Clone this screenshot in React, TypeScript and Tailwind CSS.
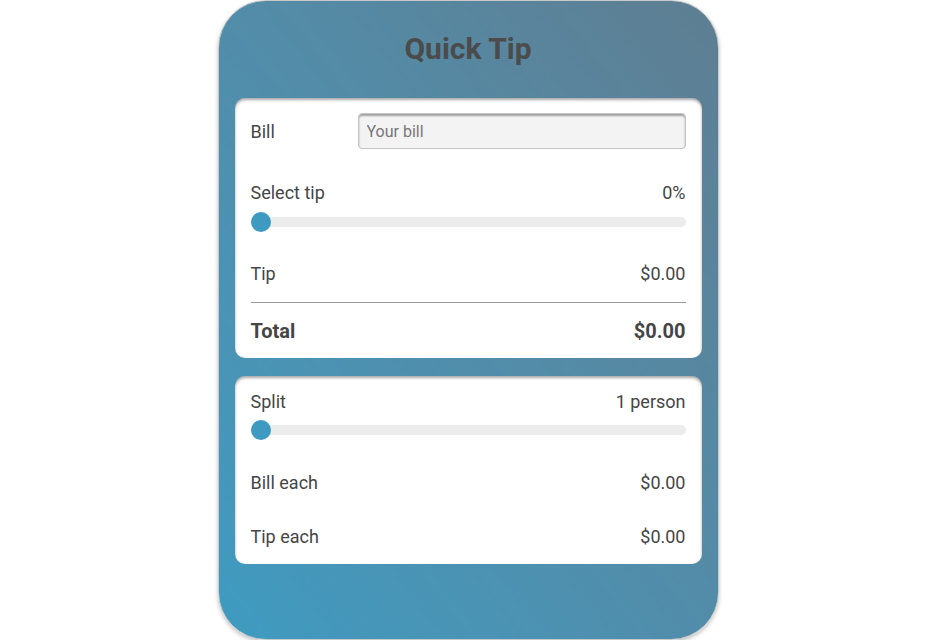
import React, { useState } from "react";

const rowStyle = "flex items-center justify-between text-[18px] leading-6";

const Slider = ({
  value,
  min,
  max,
  onChange,
}: {
  value: number;
  min: number;
  max: number;
  onChange: (v: number) => void;
}) => {
  const pct = ((value - min) / (max - min)) * 100;
  return (
    <div className="relative h-[10px] rounded-full bg-[#ececec]">
      <div
        className="absolute top-1/2 h-5 w-5 -translate-y-1/2 rounded-full bg-[#3d9bc2]"
        style={{ left: `calc(${pct}% - ${(pct / 100) * 20}px)` }}
      ></div>
      <input
        type="range"
        min={min}
        max={max}
        value={value}
        onChange={(e) => onChange(Number(e.target.value))}
        className="absolute inset-0 w-full cursor-pointer opacity-0"
      />
    </div>
  );
};

const App = () => {
  const [bill, setBill] = useState("");
  const [tip, setTip] = useState(0);
  const [split, setSplit] = useState(1);

  const amount = parseFloat(bill) || 0;
  const tipAmount = (amount * tip) / 100;
  const total = amount + tipAmount;

  return (
    <div
      className="flex h-[640px] w-full justify-center bg-white pr-[3px]"
      style={{ fontFamily: "Roboto, 'Noto Sans', sans-serif" }}
    >
      <div className="h-[640px] w-[501px] rounded-[48px] border border-[#c9c9c9] bg-gradient-to-tr from-[#3e9bc1] to-[#5e7e92] px-4 shadow-[0_2px_4px_rgba(0,0,0,0.25)]">
        <h1 className="pt-[30px] text-center text-[30px] font-bold leading-9 text-[#4b4b4b]">
          Quick Tip
        </h1>

        <div className="mt-[31px] rounded-[10px] bg-white px-4 pb-[15px] pt-[15px] text-[#454545] shadow-[inset_0_2px_3px_rgba(0,0,0,0.35)]">
          <div className="flex items-center">
            <span className="w-[107px] text-[18px]">Bill</span>
            <input
              type="text"
              placeholder="Your bill"
              value={bill}
              onChange={(e) => setBill(e.target.value)}
              className="h-[36px] flex-1 rounded-[4px] border border-[#c4c4c4] bg-[#f3f3f3] px-2 text-[16px] text-[#555] shadow-[inset_0_2px_2px_rgba(0,0,0,0.35)] outline-none placeholder:text-[#777]"
            />
          </div>

          <div className={`${rowStyle} mt-[32px]`}>
            <span>Select tip</span>
            <span>{tip}%</span>
          </div>
          <div className="mt-3">
            <Slider value={tip} min={0} max={30} onChange={setTip} />
          </div>

          <div className={`${rowStyle} mt-[35px]`}>
            <span>Tip</span>
            <span>${tipAmount.toFixed(2)}</span>
          </div>
          <div className="mt-[16px] h-px bg-[#9a9a9a]"></div>

          <div className={`${rowStyle} mt-[16px] text-[20px] font-bold`}>
            <span>Total</span>
            <span>${total.toFixed(2)}</span>
          </div>
        </div>

        <div className="mt-[18px] rounded-[10px] bg-white px-4 pb-[15px] pt-[14px] text-[#454545] shadow-[inset_0_2px_3px_rgba(0,0,0,0.35)]">
          <div className={rowStyle}>
            <span>Split</span>
            <span>
              {split} {split === 1 ? "person" : "people"}
            </span>
          </div>
          <div className="mt-[11px]">
            <Slider value={split} min={1} max={10} onChange={setSplit} />
          </div>

          <div className={`${rowStyle} mt-[36px]`}>
            <span>Bill each</span>
            <span>${(amount / split).toFixed(2)}</span>
          </div>
          <div className={`${rowStyle} mt-[30px]`}>
            <span>Tip each</span>
            <span>${(tipAmount / split).toFixed(2)}</span>
          </div>
        </div>
      </div>
    </div>
  );
};

export default App;
